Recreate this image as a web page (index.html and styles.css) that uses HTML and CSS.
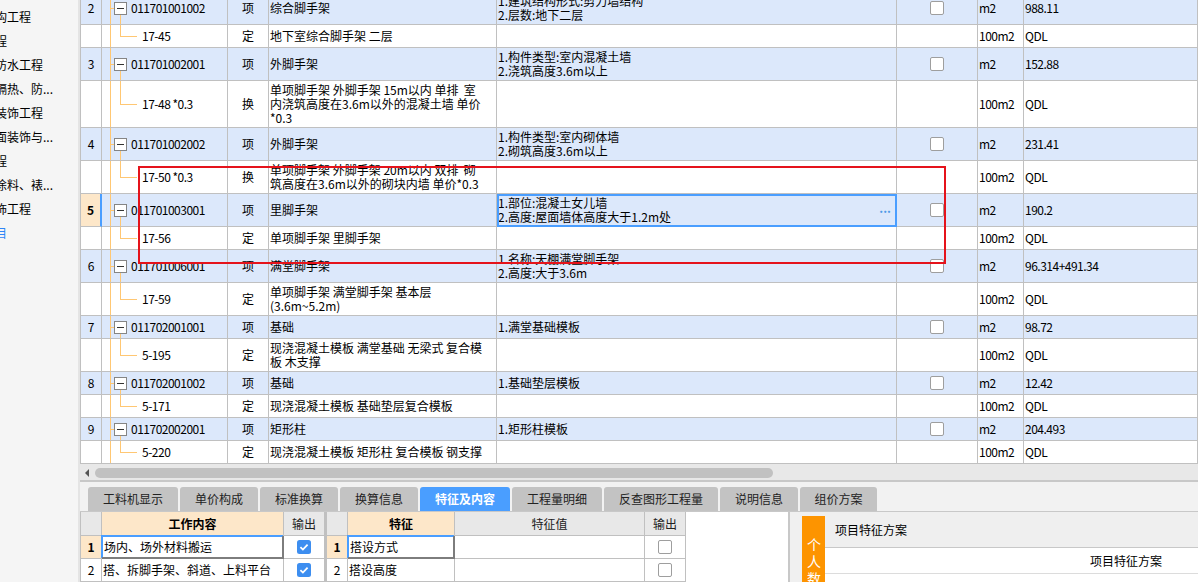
FILE: index.html
```html
<!DOCTYPE html>
<html lang="zh-CN">
<head>
<meta charset="utf-8">
<title>措施项目</title>
<link rel="stylesheet" href="styles.css">
</head>
<body>
<div class="app">
  <aside class="sidebar">
    <div class="side-item">金属结构工程</div>
    <div class="side-item">门窗工程</div>
    <div class="side-item">屋面及防水工程</div>
    <div class="side-item">保温、隔热、防...</div>
    <div class="side-item">楼地面装饰工程</div>
    <div class="side-item">墙、柱面装饰与...</div>
    <div class="side-item">天棚工程</div>
    <div class="side-item">油漆、涂料、裱...</div>
    <div class="side-item">其他装饰工程</div>
    <div class="side-item link">措施项目</div>
  </aside>
  <div class="splitter"></div>
  <main class="main">
    <div class="grid">
      <div class="rows">
        <div class="row item h33">
          <div class="c num">2</div>
          <div class="c tree tree-item"><svg class="mb" width="13" height="13" viewBox="0 0 13 13"><rect x="0.5" y="0.5" width="12" height="12" fill="#fff" stroke="#858585"/><path d="M3 6.5h7" stroke="#333"/></svg><span>011701001002</span></div>
          <div class="c type">项</div>
          <div class="c name">综合脚手架</div>
          <div class="c feat"><div>1.建筑结构形式:剪力墙结构<br>2.层数:地下二层</div></div>
          <div class="c chk"><span class="cb"></span></div>
          <div class="c unit">m2</div>
          <div class="c qty">988.11</div>
        </div>
        <div class="row h23">
          <div class="c num"></div>
          <div class="c tree tree-sub">17-45</div>
          <div class="c type">定</div>
          <div class="c name">地下室综合脚手架 二层</div>
          <div class="c feat"></div>
          <div class="c chk"></div>
          <div class="c unit">100m2</div>
          <div class="c qty">QDL</div>
        </div>
        <div class="row item h33">
          <div class="c num">3</div>
          <div class="c tree tree-item"><svg class="mb" width="13" height="13" viewBox="0 0 13 13"><rect x="0.5" y="0.5" width="12" height="12" fill="#fff" stroke="#858585"/><path d="M3 6.5h7" stroke="#333"/></svg><span>011701002001</span></div>
          <div class="c type">项</div>
          <div class="c name">外脚手架</div>
          <div class="c feat"><div>1.构件类型:室内混凝土墙<br>2.浇筑高度3.6m以上</div></div>
          <div class="c chk"><span class="cb"></span></div>
          <div class="c unit">m2</div>
          <div class="c qty">152.88</div>
        </div>
        <div class="row h47">
          <div class="c num"></div>
          <div class="c tree tree-sub">17-48 *0.3</div>
          <div class="c type">换</div>
          <div class="c name"><div>单项脚手架 外脚手架 15m以内 单排&nbsp; 室<br>内浇筑高度在3.6m以外的混凝土墙 单价<br>*0.3</div></div>
          <div class="c feat"></div>
          <div class="c chk"></div>
          <div class="c unit">100m2</div>
          <div class="c qty">QDL</div>
        </div>
        <div class="row item h33">
          <div class="c num">4</div>
          <div class="c tree tree-item"><svg class="mb" width="13" height="13" viewBox="0 0 13 13"><rect x="0.5" y="0.5" width="12" height="12" fill="#fff" stroke="#858585"/><path d="M3 6.5h7" stroke="#333"/></svg><span>011701002002</span></div>
          <div class="c type">项</div>
          <div class="c name">外脚手架</div>
          <div class="c feat"><div>1.构件类型:室内砌体墙<br>2.砌筑高度3.6m以上</div></div>
          <div class="c chk"><span class="cb"></span></div>
          <div class="c unit">m2</div>
          <div class="c qty">231.41</div>
        </div>
        <div class="row h33">
          <div class="c num"></div>
          <div class="c tree tree-sub">17-50 *0.3</div>
          <div class="c type">换</div>
          <div class="c name"><div>单项脚手架 外脚手架 20m以内 双排&nbsp; 砌<br>筑高度在3.6m以外的砌块内墙 单价*0.3</div></div>
          <div class="c feat"></div>
          <div class="c chk"></div>
          <div class="c unit">100m2</div>
          <div class="c qty">QDL</div>
        </div>
        <div class="row item h33">
          <div class="c num sel">5</div>
          <div class="c tree tree-item"><svg class="mb" width="13" height="13" viewBox="0 0 13 13"><rect x="0.5" y="0.5" width="12" height="12" fill="#fff" stroke="#858585"/><path d="M3 6.5h7" stroke="#333"/></svg><span>011701003001</span></div>
          <div class="c type">项</div>
          <div class="c name">里脚手架</div>
          <div class="c feat focus"><div>1.部位:混凝土女儿墙<br>2.高度:屋面墙体高度大于1.2m处</div><span class="more">...</span></div>
          <div class="c chk"><span class="cb"></span></div>
          <div class="c unit">m2</div>
          <div class="c qty">190.2</div>
        </div>
        <div class="row h23">
          <div class="c num"></div>
          <div class="c tree tree-sub">17-56</div>
          <div class="c type">定</div>
          <div class="c name">单项脚手架 里脚手架</div>
          <div class="c feat"></div>
          <div class="c chk"></div>
          <div class="c unit">100m2</div>
          <div class="c qty">QDL</div>
        </div>
        <div class="row item h33">
          <div class="c num">6</div>
          <div class="c tree tree-item"><svg class="mb" width="13" height="13" viewBox="0 0 13 13"><rect x="0.5" y="0.5" width="12" height="12" fill="#fff" stroke="#858585"/><path d="M3 6.5h7" stroke="#333"/></svg><span>011701006001</span></div>
          <div class="c type">项</div>
          <div class="c name">满堂脚手架</div>
          <div class="c feat"><div>1.名称:天棚满堂脚手架<br>2.高度:大于3.6m</div></div>
          <div class="c chk"><span class="cb"></span></div>
          <div class="c unit">m2</div>
          <div class="c qty">96.314+491.34</div>
        </div>
        <div class="row h33">
          <div class="c num"></div>
          <div class="c tree tree-sub">17-59</div>
          <div class="c type">定</div>
          <div class="c name"><div>单项脚手架 满堂脚手架 基本层<br>(3.6m~5.2m)</div></div>
          <div class="c feat"></div>
          <div class="c chk"></div>
          <div class="c unit">100m2</div>
          <div class="c qty">QDL</div>
        </div>
        <div class="row item h23">
          <div class="c num">7</div>
          <div class="c tree tree-item"><svg class="mb" width="13" height="13" viewBox="0 0 13 13"><rect x="0.5" y="0.5" width="12" height="12" fill="#fff" stroke="#858585"/><path d="M3 6.5h7" stroke="#333"/></svg><span>011702001001</span></div>
          <div class="c type">项</div>
          <div class="c name">基础</div>
          <div class="c feat">1.满堂基础模板</div>
          <div class="c chk"><span class="cb"></span></div>
          <div class="c unit">m2</div>
          <div class="c qty">98.72</div>
        </div>
        <div class="row h33">
          <div class="c num"></div>
          <div class="c tree tree-sub">5-195</div>
          <div class="c type">定</div>
          <div class="c name"><div>现浇混凝土模板 满堂基础 无梁式 复合模<br>板 木支撑</div></div>
          <div class="c feat"></div>
          <div class="c chk"></div>
          <div class="c unit">100m2</div>
          <div class="c qty">QDL</div>
        </div>
        <div class="row item h23">
          <div class="c num">8</div>
          <div class="c tree tree-item"><svg class="mb" width="13" height="13" viewBox="0 0 13 13"><rect x="0.5" y="0.5" width="12" height="12" fill="#fff" stroke="#858585"/><path d="M3 6.5h7" stroke="#333"/></svg><span>011702001002</span></div>
          <div class="c type">项</div>
          <div class="c name">基础</div>
          <div class="c feat">1.基础垫层模板</div>
          <div class="c chk"><span class="cb"></span></div>
          <div class="c unit">m2</div>
          <div class="c qty">12.42</div>
        </div>
        <div class="row h23">
          <div class="c num"></div>
          <div class="c tree tree-sub">5-171</div>
          <div class="c type">定</div>
          <div class="c name">现浇混凝土模板 基础垫层复合模板</div>
          <div class="c feat"></div>
          <div class="c chk"></div>
          <div class="c unit">100m2</div>
          <div class="c qty">QDL</div>
        </div>
        <div class="row item h23">
          <div class="c num">9</div>
          <div class="c tree tree-item"><svg class="mb" width="13" height="13" viewBox="0 0 13 13"><rect x="0.5" y="0.5" width="12" height="12" fill="#fff" stroke="#858585"/><path d="M3 6.5h7" stroke="#333"/></svg><span>011702002001</span></div>
          <div class="c type">项</div>
          <div class="c name">矩形柱</div>
          <div class="c feat">1.矩形柱模板</div>
          <div class="c chk"><span class="cb"></span></div>
          <div class="c unit">m2</div>
          <div class="c qty">204.493</div>
        </div>
        <div class="row h23">
          <div class="c num"></div>
          <div class="c tree tree-sub">5-220</div>
          <div class="c type">定</div>
          <div class="c name">现浇混凝土模板 矩形柱 复合模板 钢支撑</div>
          <div class="c feat"></div>
          <div class="c chk"></div>
          <div class="c unit">100m2</div>
          <div class="c qty">QDL</div>
        </div>
      </div>
    </div>
    <div class="hscroll"><span class="arrow"></span><span class="thumb"></span></div>
    <div class="tabbar">
      <div class="tab w90">工料机显示</div>
      <div class="tab w78">单价构成</div>
      <div class="tab w78">标准换算</div>
      <div class="tab w78">换算信息</div>
      <div class="tab w90 active">特征及内容</div>
      <div class="tab w90">工程量明细</div>
      <div class="tab w114">反查图形工程量</div>
      <div class="tab w78">说明信息</div>
      <div class="tab w77">组价方案</div>
    </div>
    <div class="bottom">
      <div class="bl">
        <div class="bt t1">
          <div class="tr th-row">
            <div class="bc th"></div>
            <div class="bc th key">工作内容</div>
            <div class="bc th">输出</div>
          </div>
          <div class="tr">
            <div class="bc rn sel">1</div>
            <div class="bc txt fc">场内、场外材料搬运</div>
            <div class="bc ctr"><svg width="14" height="14" viewBox="0 0 14 14"><rect width="14" height="14" rx="2.5" fill="#3d8ef0"/><path d="M3.4 7.2l2.5 2.4 4.7-4.9" fill="none" stroke="#fff" stroke-width="1.8"/></svg></div>
          </div>
          <div class="tr">
            <div class="bc rn">2</div>
            <div class="bc txt">搭、拆脚手架、斜道、上料平台</div>
            <div class="bc ctr"><svg width="14" height="14" viewBox="0 0 14 14"><rect width="14" height="14" rx="2.5" fill="#3d8ef0"/><path d="M3.4 7.2l2.5 2.4 4.7-4.9" fill="none" stroke="#fff" stroke-width="1.8"/></svg></div>
          </div>
        </div>
        <div class="bt t2">
          <div class="tr th-row">
            <div class="bc th"></div>
            <div class="bc th key">特征</div>
            <div class="bc th">特征值</div>
            <div class="bc th">输出</div>
          </div>
          <div class="tr">
            <div class="bc rn sel">1</div>
            <div class="bc txt fc">搭设方式</div>
            <div class="bc txt"></div>
            <div class="bc ctr"><span class="cb"></span></div>
          </div>
          <div class="tr">
            <div class="bc rn">2</div>
            <div class="bc txt">搭设高度</div>
            <div class="bc txt"></div>
            <div class="bc ctr"><span class="cb"></span></div>
          </div>
        </div>
      </div>
      <div class="br">
        <div class="vtab"><span class="vtext">个人数据</span></div>
        <div class="bcol">
          <div class="bhead">项目特征方案</div>
          <div class="brow">项目特征方案</div>
          <div class="bfill"></div>
        </div>
      </div>
    </div>
  </main>
  <div class="annot"></div>
</div>
</body>
</html>
```

FILE: styles.css
```css
* { box-sizing: border-box; }

body {
  margin: 0;
  width: 1198px;
  height: 582px;
  overflow: hidden;
  font-family: "Noto Sans CJK SC", "Noto Sans", sans-serif;
  font-size: 12px;
  line-height: 1;
  color: #000;
  background: #fff;
}

.app {
  position: relative;
  display: flex;
  height: 582px;
}

/* left sidebar */
.sidebar {
  width: 78px;
  flex: none;
  background: #f5f5f5;
  overflow: hidden;
  padding-top: 5px;
}
.side-item {
  height: 24px;
  line-height: 24px;
  margin-left: -41px;
  white-space: nowrap;
}
.side-item.link { color: #2f86f6; }

.splitter {
  width: 2px;
  flex: none;
  background: #e4e4e4;
}

.main {
  flex: 1;
  min-width: 0;
  display: flex;
  flex-direction: column;
}

/* main grid */
.grid {
  height: 464px;
  flex: none;
  overflow: hidden;
  border-left: 1px solid #c0c0c0;
}
.rows { margin-top: -8px; }

.row {
  display: grid;
  grid-template-columns: 21px 126px 41px 228px 400px 81px 46px 1fr;
  background: #fff;
}
.row.item { background: #dce8fb; }
.h23 { height: 23px; }
.h33 { height: 33px; }
.h47 { height: 47px; }

.c {
  display: flex;
  align-items: center;
  min-width: 0;
  overflow: hidden;
  white-space: nowrap;
  line-height: 14px;
  border-right: 1px solid #c0c0c0;
  border-bottom: 1px solid #c0c0c0;
}
.num, .type, .chk { justify-content: center; }
.name, .feat, .unit, .qty { padding-left: 1px; }
.tree span, .tree-sub, .unit, .qty { letter-spacing: -0.5px; }

.num.sel {
  background: #fde7c9;
  font-weight: bold;
  border-right: 2px solid #4a9eff;
}

.feat.focus {
  outline: 2px solid #4a9eff;
  outline-offset: -2px;
}
.more {
  margin-left: auto;
  margin-right: 5px;
  margin-top: -4px;
  color: #4f9ae6;
  font-weight: bold;
  letter-spacing: 0;
}

/* tree lines */
.tree {
  --tl: #ffc773;
  background-repeat: no-repeat;
}
.tree-item {
  padding-left: 12px;
  background-image:
    linear-gradient(var(--tl), var(--tl)),
    linear-gradient(var(--tl), var(--tl)),
    linear-gradient(var(--tl), var(--tl));
  background-size: 1px 100%, 4px 1px, 1px 50%;
  background-position: 8px 0, 8px 50%, 18px 100%;
}
.tree-item .mb {
  flex: none;
  margin-right: 4px;
}
.tree-sub {
  padding-left: 40px;
  background-image:
    linear-gradient(var(--tl), var(--tl)),
    linear-gradient(var(--tl), var(--tl)),
    linear-gradient(var(--tl), var(--tl));
  background-size: 1px 100%, 1px 50%, 17px 1px;
  background-position: 8px 0, 18px 0, 18px 50%;
}

.cb {
  display: block;
  width: 14px;
  height: 14px;
  border: 1px solid #9e9e9e;
  border-radius: 2px;
  background: #fff;
}

/* horizontal scrollbar */
.hscroll {
  height: 16px;
  flex: none;
  background: #e8e8e8;
  display: flex;
  align-items: center;
  padding-left: 5px;
}
.arrow {
  width: 0;
  height: 0;
  border-top: 4px solid transparent;
  border-bottom: 4px solid transparent;
  border-right: 4px solid #555;
  margin-top: 1px;
}
.thumb {
  margin-left: 6px;
  width: 678px;
  height: 10px;
  margin-top: 2px;
  border-radius: 5px;
  background: #c1c1c1;
}

/* tabs */
.tabbar {
  height: 31px;
  flex: none;
  border-top: 2px solid #c8c8c8;
  background: #f2f2f2;
  display: flex;
  gap: 2px;
  padding: 5px 0 0 8px;
}
.tab {
  flex: none;
  height: 24px;
  line-height: 24px;
  text-align: center;
  background: #c3c3c3;
  border-radius: 3px 3px 0 0;
  color: #222;
}
.tab.active {
  background: #4a9eff;
  color: #fff;
  font-weight: bold;
}
.w77 { width: 77px; }
.w78 { width: 78px; }
.w90 { width: 90px; }
.w114 { width: 114px; }

/* bottom panels */
.bottom {
  flex: 1;
  display: flex;
  border-top: 1px solid #c8c8c8;
  min-height: 0;
}
.bl {
  width: 710px;
  flex: none;
  display: flex;
  align-items: flex-start;
  background: #fff;
  border-right: 2px solid #c8c8c8;
}
.t1 { border-left: 1px solid #c0c0c0; }
.t2 { border-left: 2px solid #c0c0c0; }
.tr { display: grid; height: 23px; }
.tr.th-row { height: 24px; }
.t1 .tr { grid-template-columns: 21px 182px 41px; }
.t2 .tr { grid-template-columns: 21px 107px 190px 41px; }

.bc {
  display: flex;
  align-items: center;
  white-space: nowrap;
  overflow: hidden;
  border-right: 1px solid #c0c0c0;
  border-bottom: 1px solid #c0c0c0;
}
.th {
  justify-content: center;
  background: #e8e8e8;
  color: #222;
}
.th.key {
  background: #fde7c9;
  font-weight: bold;
  color: #000;
}
.rn { justify-content: center; }
.rn.sel {
  background: #fde7c9;
  font-weight: bold;
}
.txt { padding-left: 1px; }
.ctr { justify-content: center; }
.fc {
  border-right: 2px solid #7d7d7d;
  border-bottom: 2px solid #7d7d7d;
  box-shadow: -1px -1px 0 #4a9eff, inset 1px 1px 0 #4a9eff;
  padding-left: 2px;
}

.br {
  flex: 1;
  display: flex;
  background: #f0f0f0;
  min-width: 0;
}
.vtab {
  flex: none;
  width: 23px;
  height: 80px;
  margin: 4px 0 0 12px;
  padding-top: 22px;
  background: #fd9400;
  color: #fff;
  display: flex;
  justify-content: center;
  align-items: flex-start;
  overflow: hidden;
}
.vtext {
  writing-mode: vertical-rl;
  text-orientation: upright;
  white-space: nowrap;
  font-size: 14px;
  letter-spacing: 3px;
  line-height: 23px;
  flex: none;
}
.bcol {
  flex: 1;
  display: flex;
  flex-direction: column;
  min-width: 0;
}
.bhead {
  height: 36px;
  flex: none;
  display: flex;
  align-items: center;
  padding-left: 10px;
  background: #efefef;
  border-bottom: 1px solid #c8c8c8;
}
.brow {
  height: 26px;
  flex: none;
  display: flex;
  align-items: center;
  padding-left: 265px;
  background: #fff;
  border-bottom: 1px solid #dcdcdc;
}
.bfill {
  flex: 1;
  background: #fff;
}

/* red annotation rectangle drawn over the grid */
.annot {
  position: absolute;
  left: 138px;
  top: 166px;
  width: 808px;
  height: 98px;
  border: 2px solid #e5131b;
  pointer-events: none;
}
```
